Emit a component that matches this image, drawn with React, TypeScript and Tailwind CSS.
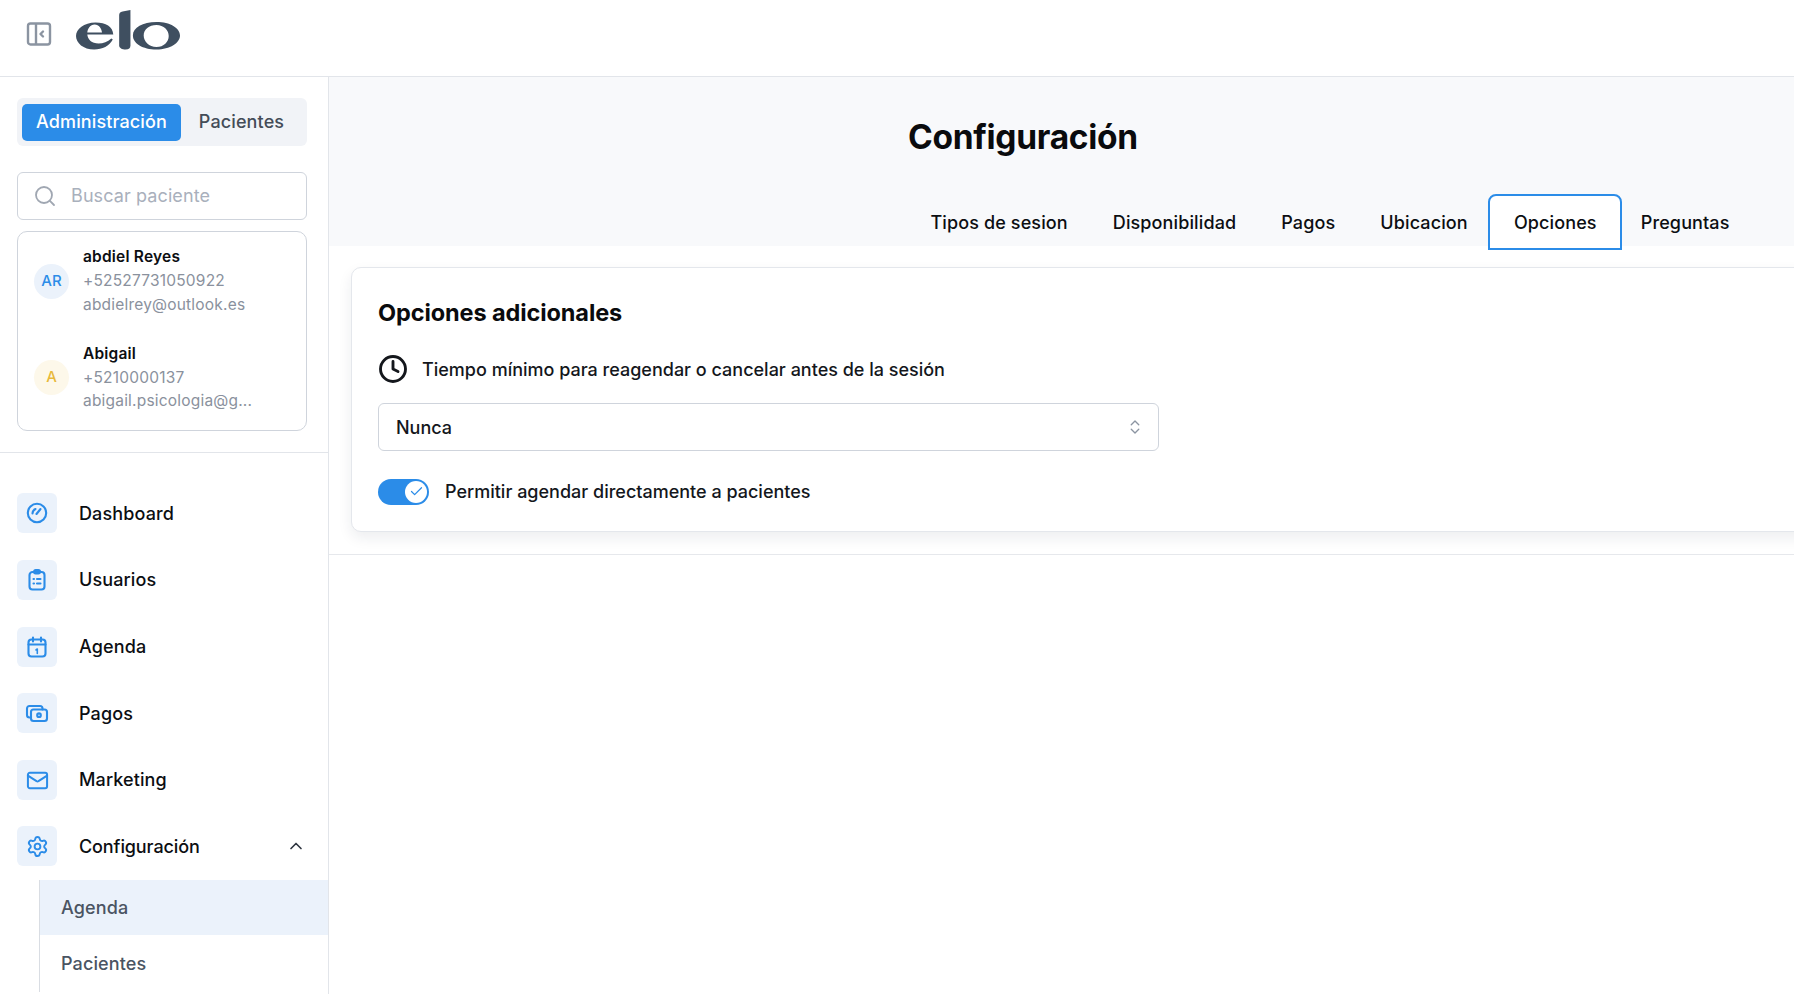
import React from "react";
import { ChevronUp, ChevronsUpDown, Search, Check, Clock, Settings, Mail } from "lucide-react";

const font = { fontFamily: "Inter, sans-serif" };

function Logo() {
  return (
    <svg width="104" height="42" viewBox="0 0 106 42" fill="none" aria-label="elo" preserveAspectRatio="none">
      <g fill="#3f4f60">
        <path fillRule="evenodd" d="M20 12.500c10.500 0 17.500 4 18 12H11.500c.5 5 4.500 9 11.500 9 5 0 9-1.500 13-5l1.500 1c-3.500 6.500-10.500 10-19 10C7.500 39.500 0 33 0 26S8 12.500 20 12.500ZM11.500 22.500h15c-.5-4-3-8-7.500-8s-7 4-7.500 8Z" />
        <path d="M44 5c0-2 1-3 3.500-3.500L55.500 0v35.500c0 2.500-1.500 4-5 4s-6.500-1.500-6.500-4Z" />
        <path fillRule="evenodd" d="M82 12c14 0 24 6 24 13.500S96 39.500 82 39.500 58 33.500 58 25.500 68 12 82 12Zm0 3c-7.500 0-13 4.500-13 10.500S74.500 37 82 37s12.500-5 12.500-11S89.500 15 82 15Z" />
      </g>
    </svg>
  );
}

function CollapseIcon() {
  return (
    <svg width="26" height="26" viewBox="0 0 26 26" fill="none" stroke="#8b94a1" strokeWidth="2.400">
      <rect x="2" y="2.500" width="22" height="21" rx="2.500" />
      <path d="M10 3v20" />
      <path d="M17 10.500l-2.500 2.500 2.500 2.500" strokeLinecap="round" strokeLinejoin="round" />
    </svg>
  );
}

const iconProps = { width: 24, height: 24, viewBox: "0 0 24 24", fill: "none", stroke: "#2b8ce8", strokeWidth: 2.100, strokeLinecap: "round" as const, strokeLinejoin: "round" as const };

function GaugeIcon() {
  return (
    <svg {...iconProps}>
      <circle cx="12" cy="12" r="9.200" />
      <path d="M11.500 13 15.500 8" />
      <path d="M7.500 12.500a5 5 0 0 1 3-4.500" />
    </svg>
  );
}
function ClipboardIcon() {
  return (
    <svg {...iconProps}>
      <rect x="4.500" y="4" width="15" height="17.500" rx="3" />
      <rect x="9" y="2" width="6" height="3.500" rx="1.700" />
      <path d="M8.500 11h.5M12 11h3.500M8.500 15.500h.5M12 15.500h3.500" />
    </svg>
  );
}
function CalendarIcon() {
  return (
    <svg {...iconProps}>
      <rect x="3.500" y="4.500" width="17" height="17" rx="3" />
      <path d="M3.500 9.500h17M8 2.500v4M16 2.500v4" />
      <path d="M11 15l1.300-1v4.500" strokeWidth="1.600" />
    </svg>
  );
}
function CashIcon() {
  return (
    <svg {...iconProps}>
      <path d="M5.500 16.500H4.500A2.500 2.500 0 0 1 2 14V7.500A2.500 2.500 0 0 1 4.500 5H15a2.500 2.500 0 0 1 2.500 2.500V8.500" />
      <rect x="6" y="8.500" width="16" height="11.500" rx="2.500" />
      <circle cx="14" cy="14.200" r="1.800" />
    </svg>
  );
}

const navItems = [
  { label: "Dashboard", icon: <GaugeIcon />, cls: "h-[40px] mb-[27px]", pad: "pt-[2px]" },
  { label: "Usuarios", icon: <ClipboardIcon />, cls: "h-[40px] mb-[27px]", pad: "" },
  { label: "Agenda", icon: <CalendarIcon />, cls: "h-[40px] mb-[26px]", pad: "" },
  { label: "Pagos", icon: <CashIcon />, cls: "h-[40px] mb-[27px]", pad: "pt-[1px]" },
  { label: "Marketing", icon: <Mail size={23} stroke="#2b8ce8" strokeWidth={2.100} />, cls: "h-[40px] mb-[26px]", pad: "" },
];

function NavRow({ label, icon, cls, pad }: { label: string; icon: React.ReactNode; cls: string; pad: string }) {
  return (
    <div className={`flex items-center ${cls}`}>
      <div className="w-[40px] h-[40px] rounded-[6px] bg-[#ebf2fb] flex items-center justify-center shrink-0">{icon}</div>
      <span className={`ml-[22px] text-[18px] font-[450] text-[#0c0e12] leading-none tracking-[0.12px] ${pad}`}>{label}</span>
    </div>
  );
}

function Patient({ initials, bg, fg, name, phone, email, cls, lead }: { initials: string; bg: string; fg: string; name: string; phone: string; email: string; cls: string; lead: string }) {
  return (
    <div className={`flex items-center ${cls}`}>
      <div className={`w-[35px] h-[35px] rounded-full flex items-center justify-center text-[15px] font-medium shrink-0 ${bg} ${fg}`}>{initials}</div>
      <div className={`ml-[14px] text-[15.500px] tracking-[0.2px] ${lead}`}>
        <div className="font-semibold text-[#0c0e12]">{name}</div>
        <div className="text-[#8a919d]">{phone}</div>
        <div className="text-[#8a919d]">{email}</div>
      </div>
    </div>
  );
}

function Tab({ label, active }: { label: string; active?: boolean }) {
  return (
    <div
      className={
        active
          ? "h-[56px] w-[134px] ml-[-2px] mr-[-4px] bg-white border-2 border-[#2b8ce8] rounded-t-[8px] flex items-center justify-center text-[18px] font-[450] tracking-[0.12px] text-[#0c0e12] relative z-10"
          : "h-[56px] px-[22.500px] flex items-center text-[18px] font-[450] tracking-[0.12px] text-[#0c0e12]"
      }
    >
      {label}
    </div>
  );
}

export default function App() {
  return (
    <div className="w-[1794px] h-[994px] overflow-hidden bg-white flex flex-col" style={font}>
      <header className="h-[77px] shrink-0 border-b border-[#e2e5ea] flex items-center pl-[26px] pb-[8px] bg-white">
        <CollapseIcon />
        <div className="ml-[24px] mt-[-6px]"><Logo /></div>
      </header>
      <div className="flex flex-1 min-h-0">
        <aside className="w-[329px] shrink-0 border-r border-[#e2e5ea] overflow-hidden">
          <div className="px-[17px] pt-[21px]">
            <div className="h-[48px] w-[290px] rounded-[6px] bg-[#f1f3f7] flex items-center px-[5px]">
              <div className="h-[37px] w-[159px] rounded-[5px] bg-[#2b8ce8] text-white text-[18px] font-[450] tracking-[0.12px] flex items-center justify-center pb-[1px]">Administración</div>
              <div className="flex-1 text-center text-[18px] font-[450] tracking-[0.12px] text-[#444c58] pb-[1px]">Pacientes</div>
            </div>
            <div className="mt-[26px] h-[48px] w-[290px] rounded-[6px] border border-[#cfd4dc] flex items-center pl-[15px]">
              <Search size={24} stroke="#a0a7b2" strokeWidth={1.800} />
              <span className="ml-[14px] text-[18px] text-[#a9b0bc] tracking-[0.1px] pb-[1px]">Buscar paciente</span>
            </div>
            <div className="mt-[11px] h-[200px] w-[290px] rounded-[10px] border border-[#cfd4dc] px-[16px] pt-[13px]">
              <Patient initials="AR" bg="bg-[#ebf2fb]" fg="text-[#2b8ce8]" name="abdiel Reyes" phone="+52527731050922" email="abdielrey@outlook.es" cls="mb-[25px]" lead="leading-[24px]" />
              <Patient initials="A" bg="bg-[#fdf8ea]" fg="text-[#e8b93a]" name="Abigail" phone="+5210000137" email="abigail.psicologia@g..." cls="" lead="leading-[23.500px]" />
            </div>
          </div>
          <div className="mt-[21px] border-t border-[#e2e5ea]" />
          <nav className="pt-[40px]">
            <div className="px-[17px]">
              {navItems.map((n) => <NavRow key={n.label} {...n} />)}
              <div className="flex items-center h-[40px]">
                <div className="w-[40px] h-[40px] rounded-[6px] bg-[#ebf2fb] flex items-center justify-center shrink-0">
                  <Settings size={23} stroke="#2b8ce8" strokeWidth={2} />
                </div>
                <span className="ml-[22px] pt-[2px] text-[18px] font-[450] text-[#0c0e12] leading-none flex-1 tracking-[-0.1px]">Configuración</span>
                <ChevronUp size={20} stroke="#2f3640" strokeWidth={2} className="mr-[5px]" />
              </div>
            </div>
            <div className="ml-[39px] mt-[14px] border-l border-[#d9dde3]">
              <div className="h-[55px] bg-[#ebf2fb] flex items-center pl-[21px] text-[18px] font-[450] tracking-[0.12px] text-[#4a5462]">Agenda</div>
              <div className="h-[57px] flex items-center pl-[21px] text-[18px] font-[450] tracking-[0.12px] text-[#4a5462]">Pacientes</div>
            </div>
          </nav>
        </aside>
        <main className="flex-1 min-w-0 overflow-hidden bg-white">
          <div className="h-[169px] bg-[#f8f9fb] relative">
            <h1 className="pt-[36px] pl-[579px] text-[33.500px] font-bold text-[#0a0b0d] leading-[48px] whitespace-nowrap tracking-[-0.3px]">Configuración</h1>
            <div className="absolute left-[579px] top-[117px] flex items-start whitespace-nowrap">
              <Tab label="Tipos de sesion" />
              <Tab label="Disponibilidad" />
              <Tab label="Pagos" />
              <Tab label="Ubicacion" />
              <Tab label="Opciones" active />
              <Tab label="Preguntas" />
            </div>
          </div>
          <div className="pl-[22px] pt-[21px] pb-[22px] border-b border-[#e6e8ec]">
            <div className="w-[1600px] h-[265px] rounded-[10px] bg-white border border-[#e4e7ec] shadow-[0_6px_14px_rgba(30,40,60,0.08)] pl-[26px] pt-[30px]">
              <h2 className="text-[23.500px] font-bold text-[#0a0b0d] leading-[30px] tracking-[-0.1px]">Opciones adicionales</h2>
              <div className="mt-[26px] flex items-center h-[30px]">
                <Clock size={30} stroke="#14171c" strokeWidth={2.300} />
                <span className="ml-[14px] text-[18px] font-[450] text-[#14171c]">Tiempo mínimo para reagendar o cancelar antes de la sesión</span>
              </div>
              <div className="mt-[19px] w-[781px] h-[48px] rounded-[6px] border border-[#cfd4dc] flex items-center justify-between pl-[17px] pr-[14px]">
                <span className="text-[18px] font-[450] text-[#14171c]">Nunca</span>
                <ChevronsUpDown size={18} stroke="#8b94a1" strokeWidth={1.800} />
              </div>
              <div className="mt-[27px] flex items-center">
                <div className="w-[51px] h-[26px] rounded-full bg-[#2b8ce8] flex items-center justify-end pr-[2px]">
                  <div className="w-[22px] h-[22px] rounded-full bg-white flex items-center justify-center">
                    <Check size={15} stroke="#2b8ce8" strokeWidth={2} />
                  </div>
                </div>
                <span className="ml-[16px] text-[18px] font-[450] text-[#14171c]">Permitir agendar directamente a pacientes</span>
              </div>
            </div>
          </div>
        </main>
      </div>
    </div>
  );
}
